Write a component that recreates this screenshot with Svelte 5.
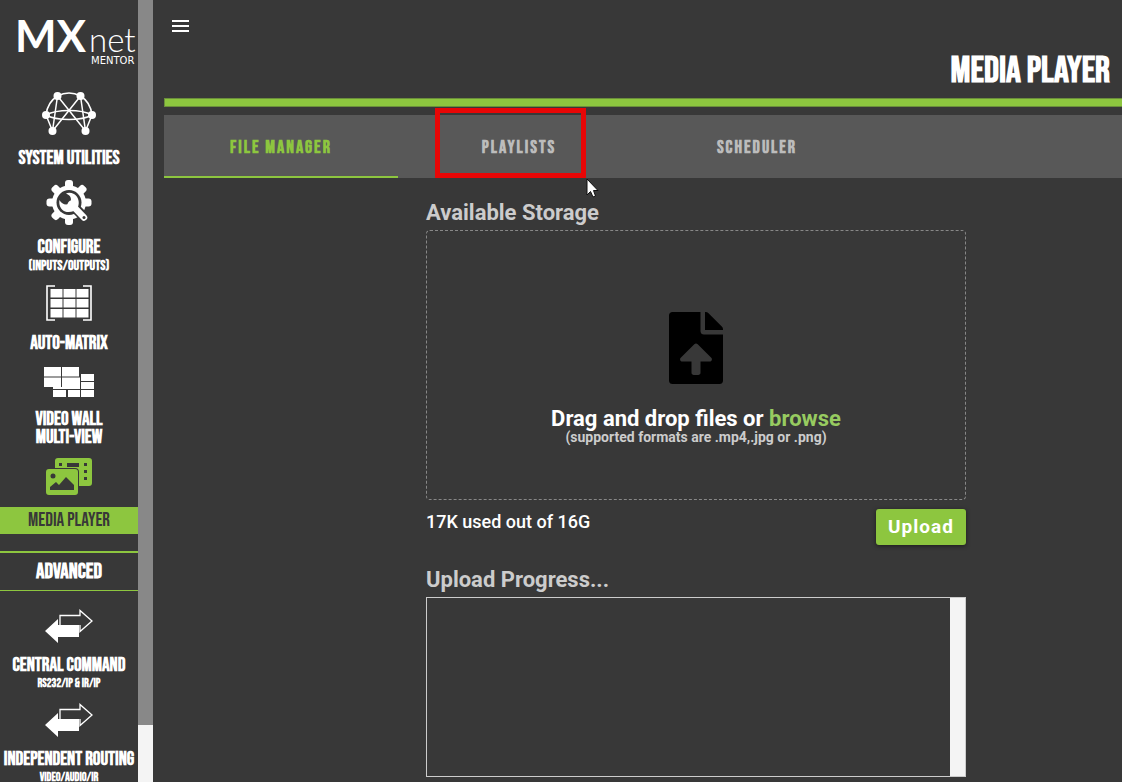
<script>
    const groups = {
        main: [
            { id: 'system', lines: ['System Utilities'], w: 54, h: 45 },
            { id: 'configure', lines: ['Configure'], sub: '(Inputs/Outputs)', w: 46, h: 47 },
            { id: 'matrix', lines: ['Auto-Matrix'], w: 46, h: 36 },
            { id: 'wall', lines: ['Video Wall', 'Multi-View'], w: 50, h: 34 },
            { id: 'media', lines: ['Media Player'], w: 46, h: 38 }
        ],
        advanced: [
            { id: 'command', lines: ['Central Command'], sub: 'RS232/IP & IR/IP', w: 48, h: 34 },
            { id: 'routing', lines: ['Independent Routing'], sub: 'Video/Audio/IR', w: 48, h: 34 }
        ]
    }

    const tabs = ['File Manager', 'Playlists', 'Scheduler']

    let page = $state('media')
    let tab = $state('File Manager')
    let picker

    const teeth = [0, 45, 90, 135, 180, 225, 270, 315]
</script>

{#snippet icon(item)}
    <svg class="icon" width={item.w} height={item.h} viewBox="0 0 {item.w} {item.h}" aria-hidden="true">
        {#if item.id === 'system'}
            <g fill="none" stroke="currentColor" stroke-width="1.5">
                <path d="M4 24C5 15 9 9 15.500 5Q27 -1 38.500 5C45 9 49 15 50 24" />
                <path d="M4 24C15 18 39 18 50 24C39 30 15 30 4 24Z" />
                <path d="M4 24L10.500 40M50 24L43.500 40" />
                <path d="M15.500 5L43.500 40M38.500 5L10.500 40" />
                <path d="M15.500 5L10.500 40M38.500 5L43.500 40" />
            </g>
            <g fill="currentColor">
                <circle cx="15.500" cy="5" r="4" />
                <circle cx="38.500" cy="5" r="4" />
                <circle cx="4" cy="24" r="4" />
                <circle cx="50" cy="24" r="4" />
                <circle cx="10.500" cy="40" r="4" />
                <circle cx="43.500" cy="40" r="4" />
            </g>
        {:else if item.id === 'configure'}
            <g fill="currentColor">
                <circle cx="23" cy="24.500" r="17" />
                {#each teeth as angle}
                    <rect x="19" y="2" width="8" height="12" rx="3" transform="rotate({angle} 23 24.5)" />
                {/each}
            </g>
            <circle cx="23" cy="24.500" r="12.500" fill="#383838" />
            <path d="M28 29L38.500 39.500" stroke="#383838" stroke-width="10" stroke-linecap="round" />
            <path d="M25 26L38 39.500" stroke="currentColor" stroke-width="6.500" stroke-linecap="round" />
            <path d="M13.500 22C12.500 27 15 32 19 33.500C22 34.500 25 34 28 33L32 29C34 24 32 18 28 16C25 14.500 22 14.500 20 15.500C24 17 26 20 24.500 24C22 28 16 27 13.500 22Z" fill="currentColor" />
            <circle cx="38" cy="39.500" r="1.500" fill="#383838" />
        {:else if item.id === 'matrix'}
            <path d="M9 1H1V35H9M37 1H45V35H37" fill="none" stroke="currentColor" stroke-width="1.600" />
            <g fill="currentColor">
                {#each [4, 14, 24] as y}
                    {#each [4.5, 17.5, 30.5] as x}
                        <rect {x} {y} width="12" height="8.500" />
                    {/each}
                {/each}
            </g>
        {:else if item.id === 'wall'}
            <g fill="currentColor">
                <rect x="0" y="4" width="17" height="9.500" />
                <rect x="18" y="4" width="17" height="9.500" />
                <rect x="0" y="14.500" width="17" height="9.500" />
                <rect x="18" y="14.500" width="18" height="10.500" />
                <rect x="37" y="11" width="13" height="7" />
                <rect x="37" y="19" width="13" height="7" />
                <rect x="9" y="23" width="27" height="3" />
                <rect x="9" y="27" width="13" height="7" />
                <rect x="24" y="27" width="12" height="7" />
                <rect x="37" y="27" width="13" height="7" />
            </g>
            <path d="M17.500 4V24" stroke="#383838" />
        {:else if item.id === 'media'}
            <path fill="currentColor" fill-rule="evenodd" d="M12 1H43Q46 1 46 4V26Q46 29 43 29H33V15Q33 11 29 11H9V4Q9 1 12 1ZM13 6V9H16V6ZM21 6V10H33V6ZM38 6V9H41V6ZM38 13V16H41V13ZM38 20V23H41V20Z" />
            <path fill="currentColor" fill-rule="evenodd" d="M3 12H29Q32 12 32 15V35Q32 38 29 38H3Q0 38 0 35V15Q0 12 3 12ZM4 33H28V28L20 20L13 28L10 25L4 30ZM7 16.500A2.500 2.500 0 1 0 7 21.500A2.500 2.500 0 1 0 7 16.500Z" />
        {:else}
            <path d="M15 16V6.500H35V1.500L47 12L35 22.500V16" fill="none" stroke="currentColor" stroke-width="1.300" />
            <path d="M0 22L13 10V16H34V28H13V34Z" fill="currentColor" />
        {/if}
    </svg>
{/snippet}

{#snippet entry(item)}
    <a class="item" class:active={page === item.id} href="#{item.id}" onclick={() => (page = item.id)}>
        {@render icon(item)}
        <span class="label">
            {#each item.lines as line}
                <span>{line}</span>
            {/each}
        </span>
        {#if item.sub}
            <small>{item.sub}</small>
        {/if}
    </a>
{/snippet}

<div class="app">
    <aside>
        <nav>
            <svg class="logo" width="124" height="62" viewBox="0 0 124 62" role="img" aria-label="MXnet Mentor">
                <g fill="#fff">
                    <text class="mx" x="1" y="48">MX</text>
                    <text class="net" x="75" y="48">net</text>
                    <text class="mentor" x="77" y="60">MENTOR</text>
                </g>
            </svg>
            {#each groups.main as item}
                {@render entry(item)}
            {/each}
            <h2>Advanced</h2>
            <div class="advanced">
                {#each groups.advanced as item}
                    {@render entry(item)}
                {/each}
            </div>
        </nav>
        <div class="track"><div class="thumb"></div></div>
    </aside>

    <main>
        <header>
            <button class="menu" aria-label="Menu">
                <span></span>
                <span></span>
                <span></span>
            </button>
            <h1>Media Player</h1>
        </header>
        <div class="rule"></div>

        <div class="tabs" role="tablist">
            {#each tabs as name}
                <button role="tab" aria-selected={tab === name} class:selected={tab === name} onclick={() => (tab = name)}>
                    {name}
                    {#if name === 'Playlists'}
                        <span class="highlight">
                            <svg class="cursor" width="14" height="20" viewBox="0 0 14 20" aria-hidden="true">
                                <path d="M1 1V17L4.500 13.500L7 19L9.500 18L7.500 12.500H12Z" fill="#fff" stroke="#111" />
                            </svg>
                        </span>
                    {/if}
                </button>
            {/each}
        </div>

        <section>
            <h3>Available Storage</h3>
            <div class="drop">
                <svg width="54" height="72" viewBox="0 0 384 512" aria-hidden="true">
                    <path d="M224 136V0H24C10.700 0 0 10.700 0 24v464c0 13.300 10.700 24 24 24h336c13.300 0 24-10.700 24-24V160H248c-13.200 0-24-10.800-24-24zm65.180 216.010H224v80c0 8.840-7.160 16-16 16h-32c-8.840 0-16-7.160-16-16v-80H94.820c-14.280 0-21.410-17.290-11.270-27.360l96.420-95.700c6.650-6.610 17.390-6.610 24.040 0l96.420 95.700c10.150 10.070 3.030 27.360-11.250 27.360zM377 105L279.100 7c-4.500-4.500-10.600-7-17-7H256v128h128v-6.100c0-6.300-2.500-12.400-7-16.900z" />
                </svg>
                <p class="hint">Drag and drop files or <button onclick={() => picker.click()}>browse</button></p>
                <p class="formats">(supported formats are .mp4,.jpg or .png)</p>
                <input type="file" aria-label="Files" accept=".mp4,.jpg,.png" multiple hidden bind:this={picker} />
            </div>
            <div class="usage">
                <p>17K used out of 16G</p>
                <button class="upload">Upload</button>
            </div>
            <h3>Upload Progress...</h3>
            <div class="progress">
                <div class="bar"></div>
            </div>
        </section>
    </main>
</div>

<style>
    :global(body) {
        margin: 0;
        background: #383838;
    }
    .app {
        display: flex;
        height: 100vh;
        overflow: hidden;
        background: #383838;
        color: #fff;
        font-family: Roboto, sans-serif;
    }
    h1, h2, h3, p {
        margin: 0;
    }
    button {
        margin: 0;
        padding: 0;
        border: 0;
        background: none;
        color: inherit;
        font: inherit;
        cursor: pointer;
    }

    aside {
        display: flex;
        flex: none;
    }
    nav {
        width: 138px;
        padding-top: 4px;
        box-sizing: border-box;
        font-family: "Bebas Neue", "Liberation Sans Narrow", sans-serif;
        font-weight: bold;
        text-transform: uppercase;
    }
    .track {
        width: 15px;
        background: #f4f4f4;
    }
    .thumb {
        height: 725px;
        max-height: 93%;
        background: #888;
    }
    .logo {
        display: block;
        margin: 0 0 25px 14px;
    }
    .mx {
        font: 700 44px Lato, sans-serif;
    }
    .net {
        font: 300 33px Lato, sans-serif;
        text-transform: none;
    }
    .mentor {
        font: 10px "DejaVu Sans", sans-serif;
    }
    .item {
        display: flex;
        flex-direction: column;
        align-items: center;
        margin-bottom: 10px;
        color: #fff;
        text-decoration: none;
        white-space: nowrap;
    }
    .icon {
        margin-bottom: 14px;
    }
    .label {
        display: flex;
        flex-direction: column;
        align-items: center;
        width: 100%;
        font-size: 19px;
        line-height: 18px;
    }
    small {
        font-size: 14px;
        line-height: 18px;
    }
    .advanced small {
        font-size: 12px;
    }
    .active .icon {
        margin-bottom: 12px;
        color: #8dc63f;
    }
    .active .label {
        background: #8dc63f;
        color: #383838;
        font-weight: normal;
        line-height: 27px;
    }
    h2 {
        margin: 17px 0 18px;
        border-top: 2px solid #8dc63f;
        border-bottom: 1px solid #8dc63f;
        font-size: 21px;
        line-height: 37px;
        text-align: center;
    }

    main {
        flex: 1;
        min-width: 0;
        padding-left: 11px;
    }
    header {
        display: flex;
        justify-content: space-between;
        align-items: flex-start;
        height: 98px;
        padding: 0 12px 0 8px;
        box-sizing: border-box;
    }
    .menu {
        display: flex;
        flex-direction: column;
        gap: 3px;
        margin-top: 20px;
    }
    .menu span {
        width: 17px;
        height: 2px;
        background: #fff;
    }
    h1 {
        align-self: flex-end;
        padding-bottom: 7px;
        font: bold 37px/40px "Bebas Neue", "Liberation Sans Narrow", sans-serif;
        text-transform: uppercase;
    }
    .rule {
        height: 7px;
        border: 1px solid #6b8f3b;
        border-right: 0;
        background: #8dc63f;
    }
    .tabs {
        display: flex;
        gap: 4px;
        margin-top: 8px;
        background: #585858;
    }
    .tabs button {
        position: relative;
        width: 234px;
        height: 63px;
        padding-top: 4px;
        border-bottom: 2px solid transparent;
        color: #bcbcbc;
        font: bold 18px "Bebas Neue", "Liberation Sans Narrow", sans-serif;
        letter-spacing: 2px;
        text-transform: uppercase;
    }
    .tabs .selected {
        border-color: #8dc63f;
        color: #8dc63f;
    }
    .highlight {
        position: absolute;
        top: -7px;
        left: 33px;
        width: 141px;
        height: 60px;
        border: 5px solid #e80606;
    }
    .cursor {
        position: absolute;
        top: 65px;
        left: 146px;
    }

    section {
        max-width: 540px;
        margin-left: 262px;
        padding-top: 17px;
    }
    h3 {
        color: #ccc;
        font-size: 22px;
        font-weight: 700;
        line-height: 35px;
    }
    .drop {
        display: flex;
        flex-direction: column;
        align-items: center;
        height: 270px;
        padding-top: 81px;
        box-sizing: border-box;
        border: 1px dashed #888;
        border-radius: 4px;
    }
    .drop svg {
        margin-bottom: 23px;
    }
    .hint {
        font-size: 22px;
        font-weight: 700;
        line-height: 23px;
    }
    .hint button {
        color: #97cb60;
    }
    .formats {
        color: #ccc;
        font-size: 14px;
        font-weight: 700;
        line-height: 14px;
    }
    .usage {
        display: flex;
        justify-content: space-between;
        margin: 9px 0 17px;
        font-size: 18px;
        font-weight: 500;
        line-height: 26px;
    }
    .upload {
        width: 90px;
        height: 36px;
        border-radius: 3px;
        background: #8dc63f;
        box-shadow: 0 1px 4px rgba(0, 0, 0, 0.5);
        font-size: 19px;
        font-weight: bold;
        letter-spacing: 1px;
    }
    .progress {
        display: flex;
        justify-content: flex-end;
        height: 180px;
        box-sizing: border-box;
        border: 1px solid #ccc;
    }
    .bar {
        width: 15px;
        background: #f4f4f4;
    }
</style>
